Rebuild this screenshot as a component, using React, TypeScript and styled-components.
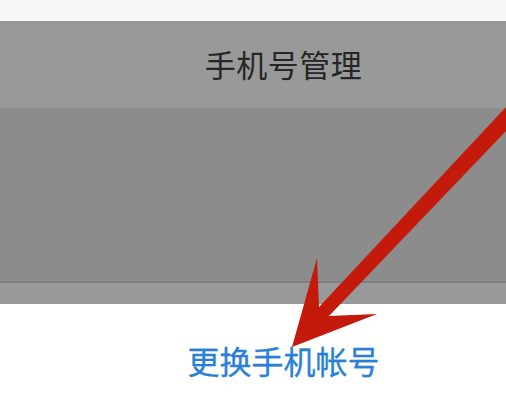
import React from 'react'
import styled, { createGlobalStyle } from 'styled-components'

const GlobalStyle = createGlobalStyle`
  html, body {
    margin: 0;
    padding: 0;
    background: #ffffff;
  }
  body {
    font-family: "Noto Sans CJK SC", "Noto Sans", sans-serif;
  }
`

const Page = styled.div`
  position: relative;
  width: 506px;
  height: 406px;
  overflow: hidden;
  display: flex;
  flex-direction: column;
`

const StatusStrip = styled.div`
  height: 21px;
  background: #f7f7f7;
`

const Overlay = styled.div`
  display: flex;
  flex-direction: column;
  background: #999999;
`

const TitleBar = styled.div`
  height: 87px;
  display: flex;
  align-items: center;
  justify-content: center;
  padding-left: 61px;
  box-sizing: border-box;
`

const Title = styled.div`
  font-size: 31px;
  color: #262626;
  letter-spacing: 0.5px;
  line-height: 1;
  margin-top: -2px;
`

const Content = styled.div`
  height: 175px;
  background: #8c8c8c;
  border-bottom: 2px solid #7f7f7f;
  box-sizing: border-box;
`

const Band = styled.div`
  height: 21px;
`

const Footer = styled.div`
  flex: 1;
  display: flex;
  justify-content: center;
  padding-left: 61px;
  padding-top: 40px;
  box-sizing: border-box;
  background: #ffffff;
`

const ChangeLink = styled.div`
  font-size: 32px;
  line-height: 1;
  color: #2a80d6;
  letter-spacing: 0;
  -webkit-text-stroke: 0.3px #2a80d6;
`

const ArrowLayer = styled.svg`
  position: absolute;
  left: 0;
  top: 0;
  pointer-events: none;
`

const Arrow: React.FC = () => (
  <ArrowLayer width={506} height={406} viewBox="0 0 506 406">
    <polygon
      fill="#c41a0b"
      points="292,347 317,258 319,307 506,107 506,131 329,316 377,314"
    />
  </ArrowLayer>
)

const App: React.FC = () => {
  return (
    <>
      <GlobalStyle />
      <Page>
        <StatusStrip />
        <Overlay>
          <TitleBar>
            <Title>手机号管理</Title>
          </TitleBar>
          <Content />
          <Band />
        </Overlay>
        <Footer>
          <ChangeLink>更换手机帐号</ChangeLink>
        </Footer>
        <Arrow />
      </Page>
    </>
  )
}

export default App
